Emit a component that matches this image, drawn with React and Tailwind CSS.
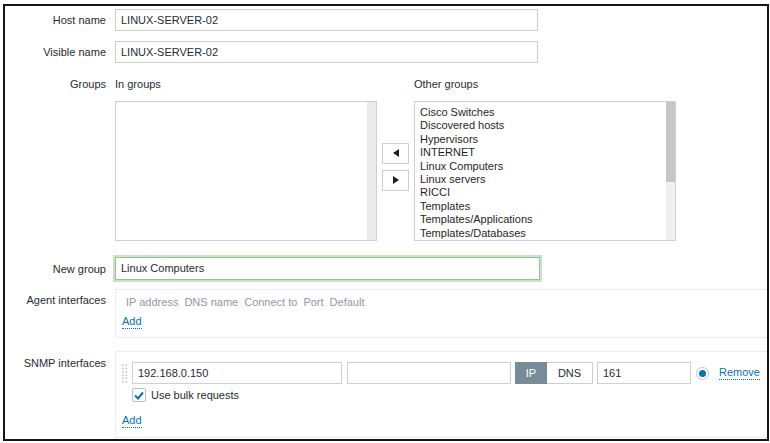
import React from "react";

const otherGroups = [
  "Cisco Switches",
  "Discovered hosts",
  "Hypervisors",
  "INTERNET",
  "Linux Computers",
  "Linux servers",
  "RICCI",
  "Templates",
  "Templates/Applications",
  "Templates/Databases",
];

const Label = ({ children, className = "" }) => (
  <div className={`w-[101px] shrink-0 text-right leading-[14px] ${className}`}>{children}</div>
);

const TextInput = ({ value, className = "" }) => (
  <div
    className={`h-[22px] border border-[#cfcfcf] bg-white px-[5px] flex items-center leading-none ${className}`}
  >
    {value}
  </div>
);

const LinkText = ({ children }) => (
  <span className="text-[#0275b8] border-b border-dotted border-[#0275b8] leading-[13px]">{children}</span>
);

const Arrow = ({ dir }) => (
  <div className="w-[27px] h-[21px] border border-[#cfcfcf] bg-white flex items-center justify-center">
    <svg width="6" height="8" viewBox="0 0 6 8">
      {dir === "left" ? <polygon points="6,0 6,8 0,4" fill="#1f1f1f" /> : <polygon points="0,0 0,8 6,4" fill="#1f1f1f" />}
    </svg>
  </div>
);

const DragHandle = () => (
  <svg width="6" height="19" viewBox="0 0 6 19">
    {[0, 1, 2, 3, 4, 5].map((r) =>
      [0, 1].map((c) => <rect key={`${r}-${c}`} x={c * 3.5} y={r * 3.3 + 0.5} width="1.6" height="1.6" fill="#c4c4c4" />)
    )}
  </svg>
);

export default function App() {
  return (
    <div className="w-[770px] h-[443px] bg-white overflow-hidden font-['Liberation_Sans',Arial,sans-serif] text-[11px] text-[#1f2c33]">
      <div className="ml-[3px] mt-[4px] w-[766px] h-[437px] border-2 border-[#161616] overflow-hidden">
        {/* Host name */}
        <div className="flex items-center mt-[3px]">
          <Label>Host name</Label>
          <TextInput value="LINUX-SERVER-02" className="ml-[9px] w-[423px]" />
        </div>

        {/* Visible name */}
        <div className="flex items-center mt-[10px]">
          <Label>Visible name</Label>
          <TextInput value="LINUX-SERVER-02" className="ml-[9px] w-[423px]" />
        </div>

        {/* Groups */}
        <div className="flex mt-[14px]">
          <Label>Groups</Label>
          <div className="ml-[9px] flex flex-col">
            <div className="flex leading-[14px]">
              <div className="w-[299px]">In groups</div>
              <div>Other groups</div>
            </div>
            <div className="flex items-center mt-[10px]">
              <div className="w-[262px] h-[140px] border border-[#cfcfcf] flex justify-end">
                <div className="w-[9px] h-full bg-[#ebebeb]" />
              </div>
              <div className="flex flex-col gap-[6px] mx-[5px] -mt-[9px]">
                <Arrow dir="left" />
                <Arrow dir="right" />
              </div>
              <div className="w-[262px] h-[140px] border border-[#cfcfcf] flex overflow-hidden">
                <div className="flex-1 pl-[5px] pt-[4px] leading-[13.4px] text-[#1f1f1f]">
                  {otherGroups.map((g) => (
                    <div key={g}>{g}</div>
                  ))}
                </div>
                <div className="w-[9px] h-full bg-[#f0f0f0]">
                  <div className="h-[80px] bg-[#c6c6c6]" />
                </div>
              </div>
            </div>
          </div>
        </div>

        {/* New group */}
        <div className="flex items-center mt-[16px]">
          <Label>New group</Label>
          <div className="ml-[9px] w-[425px] h-[23px] border border-[#98c498] shadow-[0_0_0_2px_#c9e2c9] bg-white px-[5px] flex items-center">
            Linux Computers
          </div>
        </div>

        {/* Agent interfaces */}
        <div className="flex mt-[9px]">
          <Label className="pt-[4px]">Agent interfaces</Label>
          <div className="ml-[9px] flex-1 h-[49px] border-y border-l border-[#ececec] flex flex-col">
            <div className="flex gap-[6px] pl-[10px] pt-[5px] leading-[14px] text-[#8f989d]">
              <span>IP address</span>
              <span>DNS name</span>
              <span>Connect to</span>
              <span>Port</span>
              <span>Default</span>
            </div>
            <div className="pl-[6px] mt-[6px] flex">
              <LinkText>Add</LinkText>
            </div>
          </div>
        </div>

        {/* SNMP interfaces */}
        <div className="flex mt-[13px]">
          <Label className="pt-[5px]">SNMP interfaces</Label>
          <div className="ml-[9px] flex-1 h-[87px] border-y border-l border-[#ececec] flex flex-col">
            <div className="flex items-center pl-[6px] mt-[10px]">
              <DragHandle />
              <TextInput value="192.168.0.150" className="ml-[4px] w-[210px]" />
              <TextInput value="" className="ml-[5px] w-[164px]" />
              <div className="ml-[4px] flex h-[22px]">
                <div className="w-[32px] bg-[#768d99] text-white flex items-center justify-center">IP</div>
                <div className="w-[46px] border border-l-0 border-[#cfcfcf] flex items-center justify-center">DNS</div>
              </div>
              <TextInput value="161" className="ml-[4px] w-[94px]" />
              <div className="ml-[5px] w-[13px] h-[13px] rounded-full border border-[#c4c4c4] flex items-center justify-center">
                <div className="w-[7px] h-[7px] rounded-full bg-[#0275b8]" />
              </div>
              <div className="ml-[10px] flex">
                <LinkText>Remove</LinkText>
              </div>
            </div>
            <div className="flex items-center pl-[16px] mt-[4px]">
              <div className="w-[14px] h-[14px] border border-[#bfbfbf] rounded-[2px] flex items-center justify-center bg-white">
                <svg width="10" height="9" viewBox="0 0 10 9">
                  <path d="M1 4.5 L4 7.5 L9 1.5" fill="none" stroke="#0275b8" strokeWidth="2" />
                </svg>
              </div>
              <span className="ml-[5px] leading-[14px]">Use bulk requests</span>
            </div>
            <div className="pl-[6px] mt-[12px] flex">
              <LinkText>Add</LinkText>
            </div>
          </div>
        </div>
      </div>
    </div>
  );
}
